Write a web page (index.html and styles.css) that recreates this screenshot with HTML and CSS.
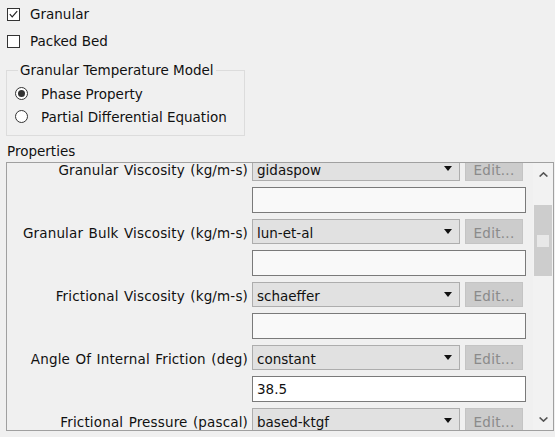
FILE: index.html
```html
<!DOCTYPE html>
<html lang="en">
<head>
    <meta charset="UTF-8">
    <title>Granular Settings</title>
    <link rel="stylesheet" href="styles.css">
</head>
<body>
    <div class="options">
        <label class="check">
            <span class="box">
                <svg width="11" height="11" viewBox="0 0 11 11"><path d="M1.8 5.2 L4.2 7.8 L9.2 2.2" fill="none" stroke="#222" stroke-width="1.2"/></svg>
            </span>
            Granular
        </label>
        <label class="check"><span class="box"></span>Packed Bed</label>
    </div>

    <fieldset class="group">
        <legend>Granular Temperature Model</legend>
        <label class="radio"><span class="dot on"></span>Phase Property</label>
        <label class="radio"><span class="dot"></span>Partial Differential Equation</label>
    </fieldset>

    <div class="props-title">Properties</div>
    <div class="props">
        <div class="props-view">
            <div class="props-grid">
                <div class="prop-label">Granular Viscosity (kg/m-s)</div>
                <div class="prop-ctrl">
                    <div class="combo"><span>gidaspow</span><span class="arrow"></span></div>
                    <div class="edit">Edit...</div>
                </div>
                <div class="field"></div>

                <div class="prop-label">Granular Bulk Viscosity (kg/m-s)</div>
                <div class="prop-ctrl">
                    <div class="combo"><span>lun-et-al</span><span class="arrow"></span></div>
                    <div class="edit">Edit...</div>
                </div>
                <div class="field"></div>

                <div class="prop-label">Frictional Viscosity (kg/m-s)</div>
                <div class="prop-ctrl">
                    <div class="combo"><span>schaeffer</span><span class="arrow"></span></div>
                    <div class="edit">Edit...</div>
                </div>
                <div class="field"></div>

                <div class="prop-label">Angle Of Internal Friction (deg)</div>
                <div class="prop-ctrl">
                    <div class="combo"><span>constant</span><span class="arrow"></span></div>
                    <div class="edit">Edit...</div>
                </div>
                <div class="field editable">38.5</div>

                <div class="prop-label">Frictional Pressure (pascal)</div>
                <div class="prop-ctrl">
                    <div class="combo"><span>based-ktgf</span><span class="arrow"></span></div>
                    <div class="edit">Edit...</div>
                </div>
                <div class="field"></div>
            </div>
        </div>
        <div class="scrollbar">
            <div class="sb-btn">
                <svg width="9" height="5" viewBox="0 0 9 5"><path d="M0.6 4.5 L4.5 0.9 L8.4 4.5" fill="none" stroke="#555" stroke-width="1.6"/></svg>
            </div>
            <div class="sb-track">
                <div class="thumb"><span class="grip"></span></div>
            </div>
            <div class="sb-btn">
                <svg width="9" height="5" viewBox="0 0 9 5"><path d="M0.6 0.5 L4.5 4.1 L8.4 0.5" fill="none" stroke="#555" stroke-width="1.6"/></svg>
            </div>
        </div>
    </div>
</body>
</html>
```

FILE: styles.css
```css
body {
    margin: 0;
    width: 555px;
    height: 437px;
    overflow: hidden;
    background-color: #f0f0f0;
    font-family: "DejaVu Sans", sans-serif;
    font-size: 13.5px;
    color: #111;
}
.options {
    padding-top: 1px;
}
.check {
    display: flex;
    align-items: center;
    gap: 10px;
    height: 26px;
    padding-left: 7px;
}
.check + .check {
    height: 27px;
    padding-top: 1px;
    box-sizing: border-box;
}
.box {
    display: flex;
    align-items: center;
    justify-content: center;
    width: 13px;
    height: 13px;
    box-sizing: border-box;
    border: 1px solid #333;
    background-color: #fff;
}

/* group box */
.group {
    width: 239px;
    min-width: 0;
    box-sizing: border-box;
    margin: 9px 0 0 6px;
    padding: 4px 0 7px 8px;
    border: 1px solid #dcdcdc;
}
.group legend {
    margin-left: 3px;
    padding: 0 2px;
    line-height: 15px;
}
.radio {
    display: flex;
    align-items: center;
    gap: 13px;
    height: 23px;
}
.dot {
    display: flex;
    align-items: center;
    justify-content: center;
    width: 13px;
    height: 13px;
    box-sizing: border-box;
    border: 1px solid #333;
    border-radius: 50%;
    background-color: #fff;
}
.dot.on::after {
    content: "";
    width: 7px;
    height: 7px;
    border-radius: 50%;
    background-color: #333;
}

/* properties panel */
.props-title {
    margin: 8px 0 0 7px;
    line-height: 15px;
}
.props {
    display: flex;
    width: 548px;
    height: 269px;
    box-sizing: border-box;
    margin: 3px 0 0 6px;
    border: 1px solid #a0a0a0;
}
.props-view {
    flex: 1;
    overflow: hidden;
}
.props-grid {
    display: grid;
    grid-template-columns: 241px 274px;
    column-gap: 4px;
    margin-top: -7px; /* scrolled down a little */
}
.prop-label {
    grid-column: 1;
    display: flex;
    align-items: center;
    justify-content: flex-end;
    height: 25px;
    box-sizing: border-box;
    padding-top: 2px;
    white-space: nowrap;
    letter-spacing: 0.15px;
    word-spacing: 1px;
}
.prop-ctrl {
    grid-column: 2;
    display: flex;
    gap: 5px;
    height: 25px;
}
.combo {
    display: flex;
    align-items: center;
    justify-content: space-between;
    width: 208px;
    box-sizing: border-box;
    padding: 2px 7px 0 4px;
    border: 1px solid #adadad;
    background-color: #e1e1e1;
}
.arrow {
    width: 0;
    height: 0;
    margin-top: -2px;
    border-left: 4px solid transparent;
    border-right: 4px solid transparent;
    border-top: 5px solid #111;
}
.edit {
    display: flex;
    align-items: center;
    justify-content: center;
    width: 58px;
    box-sizing: border-box;
    padding-top: 2px;
    border: 1px solid #c4c4c4;
    background-color: #cccccc;
    color: #8a8a8a;
    letter-spacing: 0.3px;
}
.field {
    grid-column: 2;
    display: flex;
    align-items: center;
    height: 26px;
    box-sizing: border-box;
    margin: 6px 0;
    padding: 0 4px;
    border: 1px solid #7a7a7a;
    background-color: #f9f9f9;
}
.field.editable {
    background-color: #fff;
}

/* scrollbar */
.scrollbar {
    display: flex;
    flex-direction: column;
    width: 20px;
    background-color: #f2f2f2;
}
.sb-btn {
    display: flex;
    align-items: center;
    justify-content: center;
    height: 22px;
}
.sb-track {
    flex: 1;
}
.thumb {
    display: flex;
    align-items: center;
    justify-content: center;
    height: 71px;
    margin: 20px 1px 0;
    background-color: #cdcdcd;
}
.grip {
    width: 12px;
    height: 12px;
    background-color: #e8e8e8;
}
```
